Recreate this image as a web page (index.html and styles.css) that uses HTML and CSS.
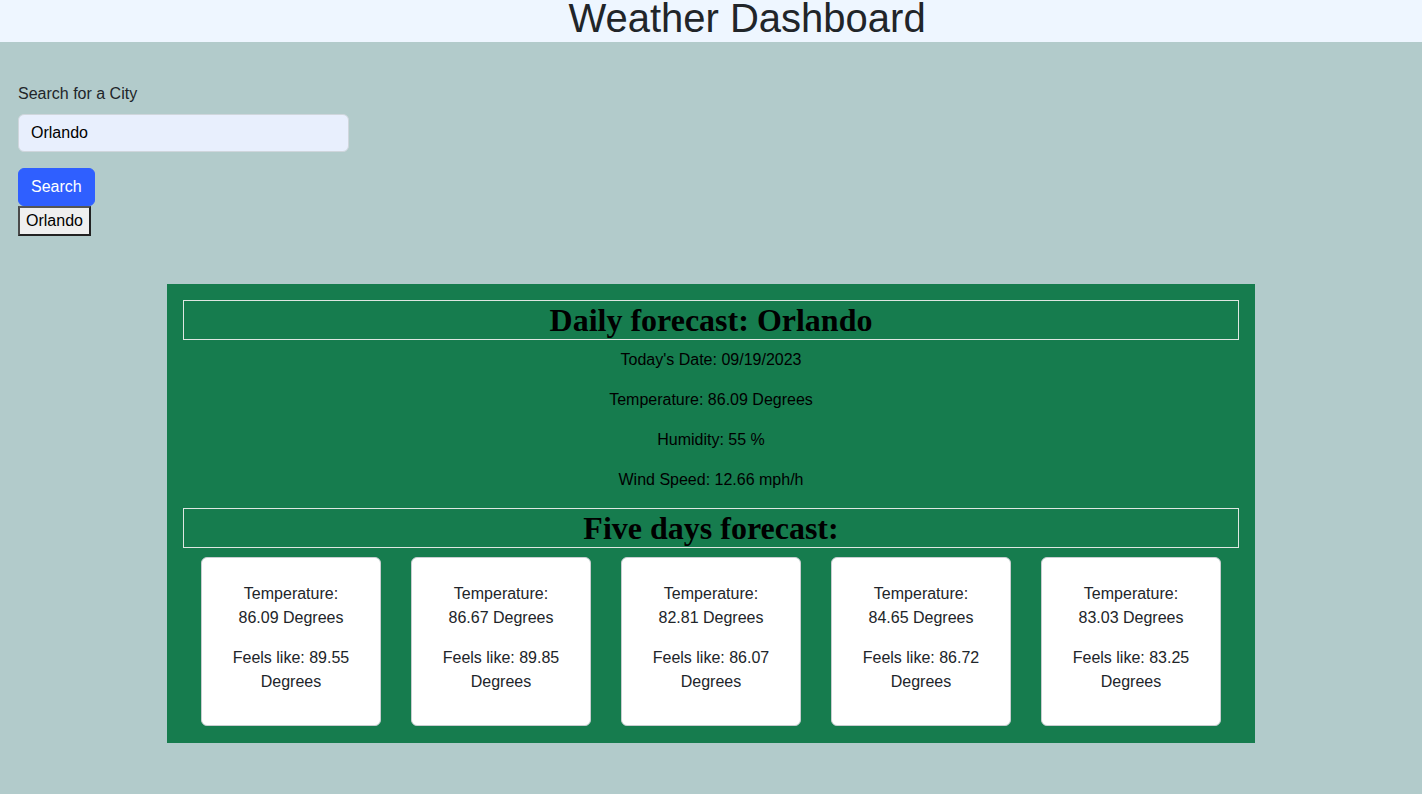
FILE: index.html
```html
<!DOCTYPE html>
<html lang="en">
<head>
<meta charset="utf-8">
<title>Weather Dashboard</title>
<link rel="stylesheet" href="styles.css">
</head>
<body>
<header class="top">
  <h1 class="title">Weather Dashboard</h1>
</header>
<main class="page">
  <section class="search">
    <label class="search-label" for="city">Search for a City</label>
    <input class="search-input" id="city" type="text" value="Orlando">
    <button class="search-btn" type="button">Search</button>
    <div class="history">
      <button class="history-btn" type="button">Orlando</button>
    </div>
  </section>
  <section class="forecast">
    <h2 class="box-title">Daily forecast: Orlando</h2>
    <p class="info">Today's Date: 09/19/2023</p>
    <p class="info">Temperature: 86.09 Degrees</p>
    <p class="info">Humidity: 55 %</p>
    <p class="info">Wind Speed: 12.66 mph/h</p>
    <h2 class="box-title">Five days forecast:</h2>
    <div class="cards">
      <div class="card"><p class="card-line">Temperature: 86.09 Degrees</p><p class="card-line">Feels like: 89.55 Degrees</p></div>
      <div class="card"><p class="card-line">Temperature: 86.67 Degrees</p><p class="card-line">Feels like: 89.85 Degrees</p></div>
      <div class="card"><p class="card-line">Temperature: 82.81 Degrees</p><p class="card-line">Feels like: 86.07 Degrees</p></div>
      <div class="card"><p class="card-line">Temperature: 84.65 Degrees</p><p class="card-line">Feels like: 86.72 Degrees</p></div>
      <div class="card"><p class="card-line">Temperature: 83.03 Degrees</p><p class="card-line">Feels like: 83.25 Degrees</p></div>
    </div>
  </section>
</main>
</body>
</html>
```
FILE: styles.css
```css
* { box-sizing: border-box; }
html, body { margin: 0; padding: 0; }
body {
  background: #b2cbcb;
  font-family: "Liberation Sans", Arial, sans-serif;
  font-size: 16px;
  line-height: 24px;
  color: #212529;
  min-height: 794px;
}
.top {
  background: #eef6ff;
  height: 42px;
  padding-left: 72px;
  text-align: center;
}
.title {
  margin: 0;
  font-weight: 400;
  font-size: 40px;
  line-height: 37px;
  color: #212529;
}
.page { padding: 40px 0 51px; }
.search {
  padding-left: 18px;
  display: flex;
  flex-direction: column;
  align-items: flex-start;
}
.search-label { display: block; margin-bottom: 8px; }
.search-input {
  width: 331px;
  height: 38px;
  border: 1px solid #cfd6dc;
  border-radius: 6px;
  background: #e8effd;
  font-family: inherit;
  font-size: 16px;
  color: #000;
  padding: 0 12px;
  margin: 0 0 16px;
}
.search-btn {
  height: 38px;
  padding: 0 12px;
  border: 1px solid #2f5fff;
  border-radius: 6px;
  background: #2f5fff;
  color: #fff;
  font-family: inherit;
  font-size: 16px;
  margin: 0;
}
.history { display: flex; }
.history-btn {
  height: 30px;
  padding: 0 6px;
  background: #efefef;
  border: 2px solid #222;
  border-top-color: #555;
  border-left-color: #4a4a4a;
  font-family: inherit;
  font-size: 16px;
  color: #000;
  margin: 0;
}
.forecast {
  width: 1088px;
  margin: 48px auto 0;
  background: #167c4e;
  padding: 16px 16px 17px;
  text-align: center;
  color: #000;
}
.box-title {
  margin: 0 0 8px;
  border: 1px solid #dfe6e2;
  font-family: "Liberation Serif", "Times New Roman", serif;
  font-weight: 700;
  font-size: 32px;
  line-height: 38px;
  color: #000;
}
.info { margin: 0 0 16px; }
.cards {
  display: flex;
  justify-content: center;
  gap: 30px;
  padding-top: 1px;
}
.card {
  width: 180px;
  height: 169px;
  background: #fff;
  border: 1px solid #c8cdd0;
  border-radius: 6px;
  padding: 24px 20px 16px;
  color: #212529;
}
.card-line { margin: 0 0 16px; }
```
